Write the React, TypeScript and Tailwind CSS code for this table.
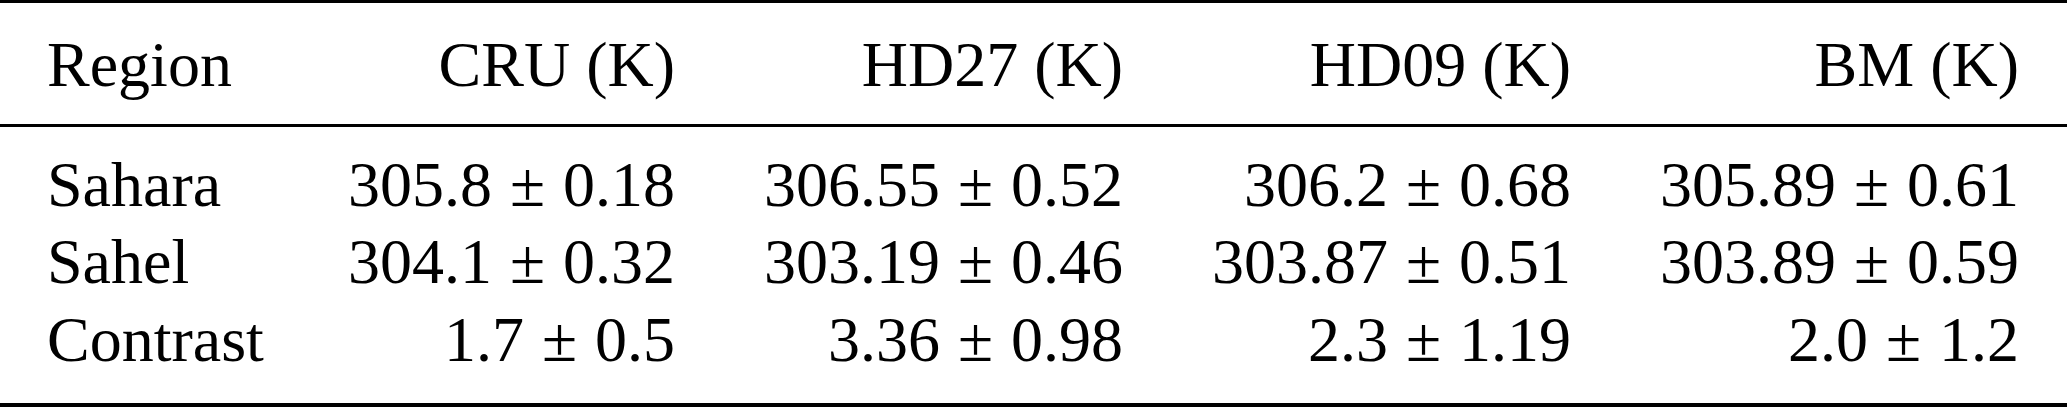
import React from "react";

const rows: [string, string[]][] = [
  ["Sahara", ["305.8|0.18", "306.55|0.52", "306.2|0.68", "305.89|0.61"]],
  ["Sahel", ["304.1|0.32", "303.19|0.46", "303.87|0.51", "303.89|0.59"]],
  ["Contrast", ["1.7|0.5", "3.36|0.98", "2.3|1.19", "2.0|1.2"]],
];

const headers = ["CRU (K)", "HD27 (K)", "HD09 (K)", "BM (K)"];

function PM({ v }: { v: string }) {
  const [a, b] = v.split("|");
  return (
    <span className="whitespace-nowrap">
      {a}
      <span className="mx-[18px]">±</span>
      {b}
    </span>
  );
}

const gridCols = "grid grid-cols-[250px_378px_448px_448px_448px] pl-[47px] pr-[48px]";

export default function App() {
  return (
    <div className="w-[2067px] h-[407px] bg-white font-['Liberation_Serif'] text-[64px] leading-[77.5px] text-black">
      <div className="border-t-[3px] border-black">
        <div className={`${gridCols} pt-[23px] pb-[20px]`}>
          <div>Region</div>
          {headers.map((h) => (
            <div key={h} className="text-right">
              {h}
            </div>
          ))}
        </div>
      </div>
      <div className="border-t-[3px] border-b-[4px] border-black pt-[19px] pb-[25px]">
        {rows.map(([name, vals]) => (
          <div key={name} className={gridCols}>
            <div>{name}</div>
            {vals.map((v, i) => (
              <div key={i} className="text-right">
                <PM v={v} />
              </div>
            ))}
          </div>
        ))}
      </div>
    </div>
  );
}
